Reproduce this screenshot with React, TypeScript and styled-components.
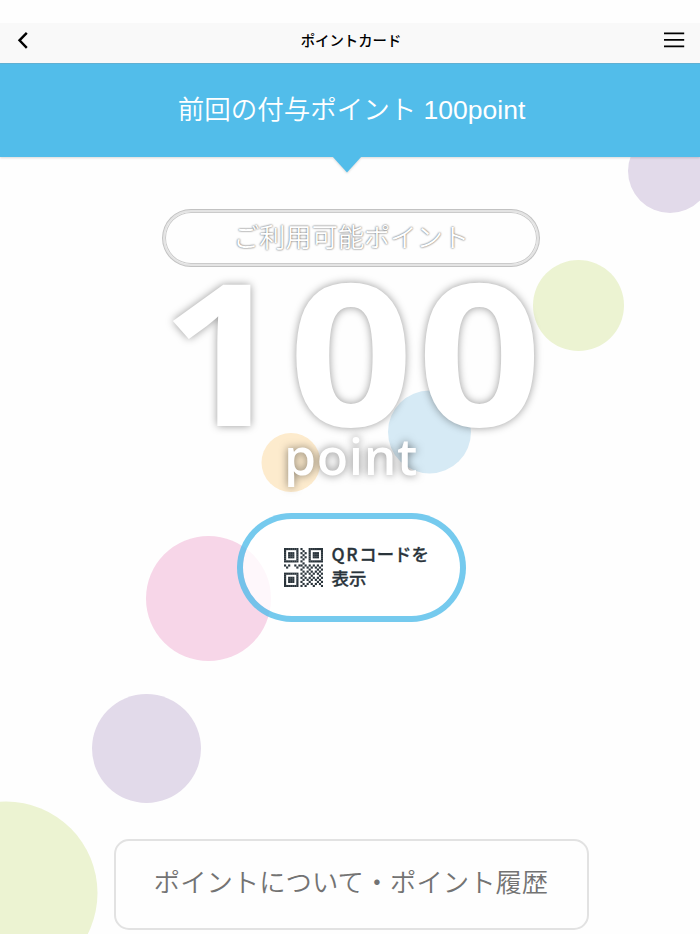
import React from "react";
import styled, { createGlobalStyle } from "styled-components";

const GlobalStyle = createGlobalStyle`
  * { box-sizing: border-box; }
  html, body { margin: 0; padding: 0; background: #fefefe; }
  body { font-family: "Liberation Sans", "Noto Sans CJK JP", sans-serif; }
  button { margin: 0; padding: 0; border: 0; background: none; font: inherit; cursor: pointer; }
`;

const Screen = styled.div`
  position: relative;
  isolation: isolate;
  width: 700px;
  height: 934px;
  overflow: hidden;
  display: flex;
  flex-direction: column;
  background: #fefefe;
`;

const StatusSpace = styled.div`
  height: 23px;
  flex: none;
`;

const NavBar = styled.header`
  height: 41px;
  flex: none;
  display: grid;
  grid-template-columns: 60px 1fr 60px;
  align-items: center;
  padding: 0 14px 7px 14px;
  background: #f9f9f9;
  border-bottom: 1px solid #62b3d6;
`;

const NavTitle = styled.h1`
  margin: 0 0 0 2px;
  text-align: center;
  font: 500 14.4px/20px "Noto Sans CJK JP", sans-serif;
  color: #000;
`;

const IconButton = styled.button<{ $end?: boolean }>`
  display: flex;
  justify-content: ${(p) => (p.$end ? "flex-end" : "flex-start")};
`;

const Banner = styled.section`
  height: 93px;
  flex: none;
  display: flex;
  flex-direction: column;
  align-items: center;
  background: #52bdea;
  filter: drop-shadow(0 1px 1px rgba(0, 0, 0, 0.15));
`;

const BannerText = styled.p`
  margin: 27px 0 0 3px;
  height: 38px;
  flex: none;
  white-space: pre;
  font: 350 26.5px/38px "Liberation Sans", "Noto Sans CJK JP", sans-serif;
  color: #fff;
`;

const BannerArrow = styled.svg`
  flex: none;
  margin: 27px 7px 0 0;
`;

const Content = styled.main`
  flex: 1;
  display: flex;
  flex-direction: column;
  align-items: center;
  padding: 53px 0 0 2px;
`;

const PointLabel = styled.div`
  width: 376px;
  height: 56px;
  flex: none;
  display: flex;
  align-items: center;
  justify-content: center;
  padding-bottom: 4px;
  border: 2px solid #e4e4e4;
  border-radius: 28px;
  background: #fefefe;
  box-shadow: 0 0 0 1px #c2c2c2, inset 0 0 0 1px #cbcbcb;
  font: 350 26.2px/30px "Noto Sans CJK JP", sans-serif;
  color: #fff;
  text-shadow: 0 0 2px rgba(0, 0, 0, 0.55), 0 0 2px rgba(0, 0, 0, 0.3);
`;

const PointValue = styled.div`
  height: 156px;
  flex: none;
  margin: 5px 0 0 3px;
  font: 700 197px/157px "Open Sans", sans-serif;
  letter-spacing: 3.2px;
  transform: scaleX(1.11);
  color: #fff;
  text-shadow: 0 0 8px rgba(0, 0, 0, 0.4);
`;

const PointUnit = styled.div`
  height: 60px;
  flex: none;
  margin: -1px 0 0 1px;
  font: 650 50px/60px "Open Sans", sans-serif;
  letter-spacing: 0.6px;
  transform: scaleX(1.03);
  color: #fff;
  text-shadow: 0 0 8px rgba(0, 0, 0, 0.5);
`;

const QrButton = styled.button`
  width: 229px;
  height: 109px;
  flex: none;
  margin-top: 27px;
  display: flex;
  align-items: center;
  gap: 9px;
  padding: 0 0 0 41px;
  border: 6px solid rgba(82, 189, 234, 0.8);
  border-radius: 55px;
  background: rgba(255, 255, 255, 0.8);
  background-clip: padding-box;
`;

const QrText = styled.span`
  margin-top: -4px;
  text-align: left;
  white-space: pre;
  font: 500 17.4px/24px "Noto Sans CJK JP", sans-serif;
  -webkit-text-stroke: 0.3px #2a343b;
  color: #2a343b;
`;

const Latin = styled.span`
  letter-spacing: 1.6px;
`;

const HistoryButton = styled.button`
  width: 475px;
  height: 91px;
  flex: none;
  margin-top: 216.5px;
  padding-bottom: 6px;
  border: 2px solid #e2e2e2;
  border-radius: 15px;
  background: #fefefe;
  font: 350 26.35px/38px "Noto Sans CJK JP", sans-serif;
  color: #737373;
`;

const Bubbles = styled.svg`
  position: absolute;
  inset: 0;
  z-index: -1;
`;

const bubbles = [
  { x: 670, y: 171, r: 42, fill: "#e2daea" },
  { x: 578.5, y: 305.5, r: 45.5, fill: "#ecf3d2" },
  { x: 429.5, y: 432, r: 41.5, fill: "#d6eaf5" },
  { x: 291, y: 462.5, r: 29.5, fill: "#fdebcd" },
  { x: 208.5, y: 598.5, r: 62.5, fill: "#f7d6e8" },
  { x: 146.5, y: 748.5, r: 54.5, fill: "#e2daea" },
  { x: 6, y: 893, r: 91.5, fill: "#ecf3d2" },
];

const qrRows = [
  "#######.#...#######",
  "#.....#..#..#.....#",
  "#.###.#.#.#.#.###.#",
  "#.###.#..#..#.###.#",
  "#.###.#.#.#.#.###.#",
  "#.....#..#..#.....#",
  "#######.#...#######",
  ".........#.........",
  "#.#..#.##.#.#.#.#.#",
  ".#....#..#.#.#.#.#.",
  "........#...#...#.#",
  ".........#.#.#.#.#.",
  "#######.#.#.#.#.#.#",
  "#.....#..#...#...#.",
  "#.###.#.#.#.#.#.#.#",
  "#.###.#..#.#.#.#.#.",
  "#.###.#.#...#...#.#",
  "#.....#..#.#.#.#.#.",
  "#######.#.#...#...#",
];

const QrIcon = () => (
  <svg width="39" height="39" viewBox="0 0 19 19" fill="#2a343b" aria-hidden="true">
    {qrRows.map((row, y) =>
      [...row].map((c, x) => (c === "#" ? <rect key={`${x}-${y}`} x={x} y={y} width="1.05" height="1.05" /> : null)),
    )}
  </svg>
);

export default function App() {
  return (
    <>
      <GlobalStyle />
      <Screen>
        <Bubbles width="700" height="934" aria-hidden="true">
          {bubbles.map((b) => (
            <circle key={`${b.x}-${b.y}`} cx={b.x} cy={b.y} r={b.r} fill={b.fill} />
          ))}
        </Bubbles>
        <StatusSpace />
        <NavBar>
          <IconButton aria-label="戻る">
            <svg width="18" height="18" viewBox="0 0 18 18" fill="none" stroke="#000" strokeWidth="2.4">
              <path d="M12.8 1.8 5.5 9.3l7.3 7.5" />
            </svg>
          </IconButton>
          <NavTitle>ポイントカード</NavTitle>
          <IconButton $end aria-label="メニュー">
            <svg width="22" height="18" viewBox="0 0 22 18" stroke="#000" strokeWidth="1.8">
              <path d="M0 2.3h20.2M0 8.8h20.2M0 15.4h20.2" />
            </svg>
          </IconButton>
        </NavBar>
        <Banner>
          <BannerText>前回の付与ポイント 100point</BannerText>
          <BannerArrow width="30" height="18" viewBox="0 0 30 18">
            <path d="M0 0h30L15 16.5z" fill="#52bdea" />
          </BannerArrow>
        </Banner>
        <Content>
          <PointLabel>ご利用可能ポイント</PointLabel>
          <PointValue>100</PointValue>
          <PointUnit>point</PointUnit>
          <QrButton>
            <QrIcon />
            <QrText>
              <Latin>QR</Latin>
              {"コードを\n表示"}
            </QrText>
          </QrButton>
          <HistoryButton>ポイントについて・ポイント履歴</HistoryButton>
        </Content>
      </Screen>
    </>
  );
}
